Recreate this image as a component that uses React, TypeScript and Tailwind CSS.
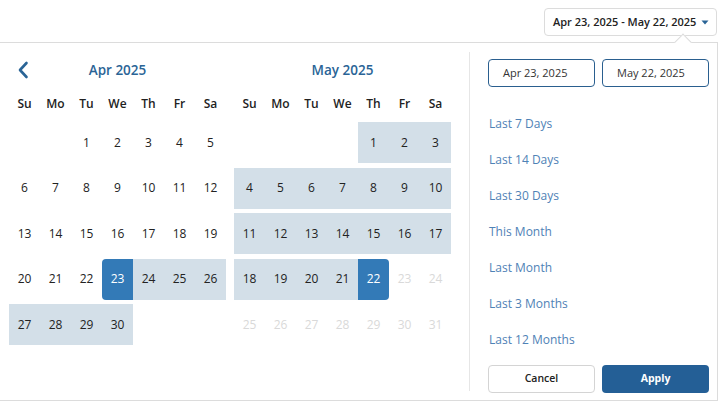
import React from "react";

type Day = { n: number | null; state?: "range" | "start" | "end" | "off" };

const weekDays = ["Su", "Mo", "Tu", "We", "Th", "Fr", "Sa"];

const buildMonth = (startDow: number, days: number, fn: (d: number) => Day["state"]) => {
  const cells: Day[] = [];
  for (let i = 0; i < startDow; i++) cells.push({ n: null });
  for (let d = 1; d <= days; d++) cells.push({ n: d, state: fn(d) });
  return cells;
};

const april = buildMonth(2, 30, (d) => (d === 23 ? "start" : d > 23 ? "range" : undefined));
const may = buildMonth(4, 31, (d) => (d === 22 ? "end" : d < 22 ? "range" : "off"));

const presets = [
  "Last 7 Days",
  "Last 14 Days",
  "Last 30 Days",
  "This Month",
  "Last Month",
  "Last 3 Months",
  "Last 12 Months",
];

const DayCell = ({ day }: { day: Day }) => {
  if (day.n === null) return <div className="h-[41px]" />;
  let cls = "text-[#222]";
  if (day.state === "range") cls = "bg-[#d3dfe8] text-[#222]";
  if (day.state === "start") cls = "bg-[#337ab7] text-white rounded-l-[4px]";
  if (day.state === "end") cls = "bg-[#337ab7] text-white rounded-r-[4px]";
  if (day.state === "off") cls = "text-[#d9d9d9]";
  return (
    <div className={`h-[41px] flex items-center justify-center text-[12px] ${cls}`}>{day.n}</div>
  );
};

const Month = ({ title, cells, showPrev }: { title: string; cells: Day[]; showPrev?: boolean }) => {
  return (
    <div className="w-[217px]">
      <div className="grid grid-cols-7 h-[20px] items-center">
        <div className="flex justify-center">
          {showPrev && (
            <svg width="12" height="18" viewBox="0 0 12 18" className="-ml-[3px]">
              <polyline
                points="9.5,2 3,9 9.5,16"
                fill="none"
                stroke="#2a6496"
                strokeWidth="2.6"
                strokeLinecap="round"
                strokeLinejoin="round"
              />
            </svg>
          )}
        </div>
        <div className="col-span-5 text-center text-[13.5px] font-semibold text-[#2a6496]">{title}</div>
        <div />
      </div>
      <div className="grid grid-cols-7 h-[28px] mt-[10px] items-center">
        {weekDays.map((w) => (
          <div key={w} className="text-center text-[12px] font-semibold text-[#222]">
            {w}
          </div>
        ))}
      </div>
      <div className="grid grid-cols-7 gap-y-[4.5px] mt-[4px]">
        {cells.map((c, i) => (
          <DayCell key={i} day={c} />
        ))}
      </div>
    </div>
  );
};

export default function App() {
  return (
    <div
      className="w-[721px] h-[402px] bg-white overflow-hidden"
      style={{ fontFamily: '"Open Sans", "Noto Sans", sans-serif' }}
    >
      <div className="flex justify-end pt-[8px] pr-[4px]">
        <button className="h-[28px] w-[173px] border border-[#dcdcdc] rounded-[4px] flex items-center pl-[8px] pr-[7px]">
          <span className="text-[11px] font-semibold text-[#222] whitespace-nowrap">
            Apr 23, 2025 - May 22, 2025
          </span>
          <svg width="8" height="5" viewBox="0 0 8 5" className="ml-auto">
            <polygon points="0.5,0.5 7.5,0.5 4,4.5" fill="#2a6496" />
          </svg>
        </button>
      </div>

      <div className="relative mt-[6px] w-[718px] h-[359px] border-t border-r border-b border-[#dcdcdc] flex">
        <div className="absolute -top-[7px] left-[677px] w-[12px] h-[12px] rotate-45 bg-white border-l border-t border-[#dcdcdc]" />

        <div className="w-[469px] flex gap-[8px] pl-[9px] pt-[17px]">
          <Month title="Apr 2025" cells={april} showPrev />
          <Month title="May 2025" cells={may} />
        </div>

        <div className="w-px bg-[#e6e6e6] my-[9px]" />

        <div className="flex-1 pl-[18px] pr-[8px] pt-[16px] flex flex-col">
          <div className="flex gap-[7px]">
            <div className="w-[107px] h-[28px] border border-[#2a5f8f] rounded-[4px] flex items-center pl-[14px] text-[11px] text-[#333]">
              Apr 23, 2025
            </div>
            <div className="w-[107px] h-[28px] border border-[#2a5f8f] rounded-[4px] flex items-center pl-[14px] text-[11px] text-[#333]">
              May 22, 2025
            </div>
          </div>
          <div className="mt-[19px] flex flex-col">
            {presets.map((p) => (
              <div key={p} className="h-[36px] flex items-center pl-px text-[12px] text-[#4f82b6]">
                {p}
              </div>
            ))}
          </div>
          <div className="mt-[7px] flex gap-[7px]">
            <button className="w-[107px] h-[28px] border border-[#d4d4d4] rounded-[4px] bg-white text-[10.5px] font-semibold text-[#222]">
              Cancel
            </button>
            <button className="w-[107px] h-[28px] rounded-[4px] bg-[#245f96] text-[10.5px] font-bold text-white">
              Apply
            </button>
          </div>
        </div>
      </div>
    </div>
  );
}
